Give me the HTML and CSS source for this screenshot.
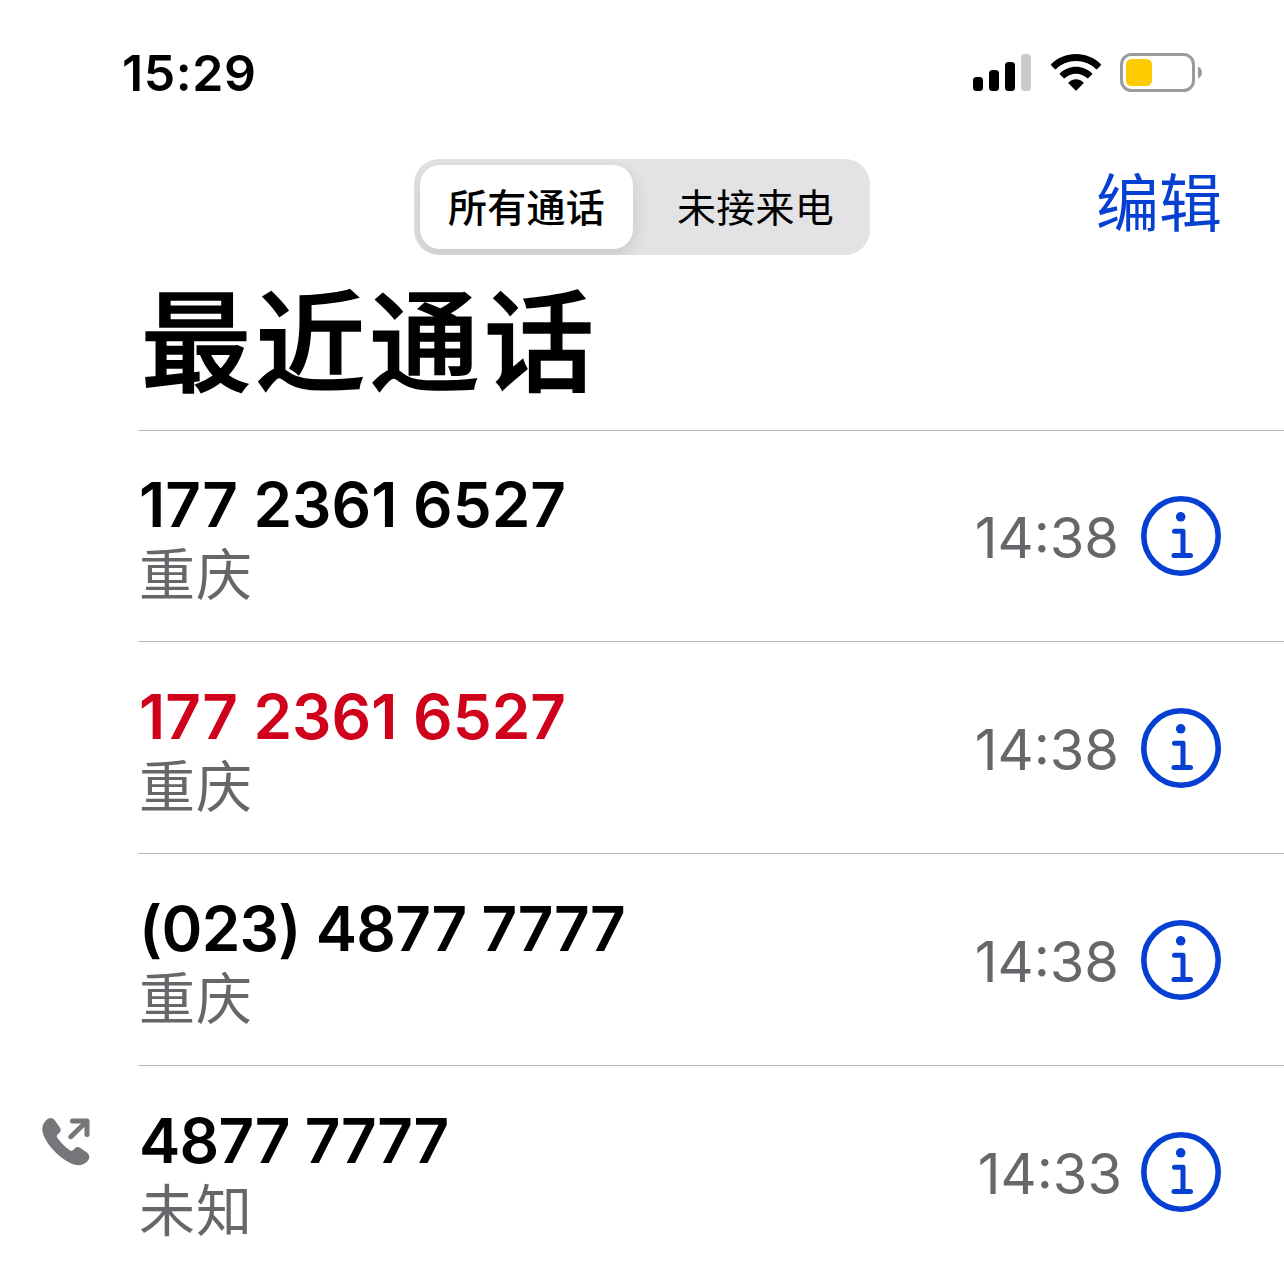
FILE: index.html
```html
<!DOCTYPE html>
<html lang="zh-CN">

<head>
    <meta charset="UTF-8">
    <meta name="viewport" content="width=device-width, initial-scale=1.0">
    <title>最近通话</title>
    <link rel="stylesheet" href="styles.css">
</head>

<body>
    <div class="status-bar">
        <span class="clock">15:29</span>
        <div class="status-icons">
            <svg class="signal" width="58" height="37" viewBox="0 0 58 37">
                <rect x="0" y="23" width="10" height="14" rx="3.5"/>
                <rect x="16" y="16" width="10" height="21" rx="3.5"/>
                <rect x="32" y="8" width="10" height="29" rx="3.5"/>
                <rect x="48" y="0" width="10" height="37" rx="3.5" fill="#cbcbcb"/>
            </svg>
            <svg class="wifi" width="50" height="37" viewBox="0 0 50 37">
                <path d="M25 0C34.500 0 43.500 3.700 49.700 10Q50.300 10.700 49.700 11.400L46.200 14.900Q45.500 15.500 44.800 14.900C39.500 9.800 32.500 7 25 7S10.500 9.800 5.200 14.900Q4.500 15.500 3.800 14.900L.3 11.400Q-.3 10.700 .3 10C6.500 3.700 15.500 0 25 0Z"/>
                <path d="M25 12.700C31.100 12.700 36.800 15.100 41 19.200Q41.700 19.900 41 20.600L37.400 24.100Q36.700 24.700 36 24.100C33 21.300 29.200 19.700 25 19.700S17 21.300 14 24.100Q13.300 24.700 12.600 24.100L9 20.600Q8.300 19.900 9 19.200C13.200 15.100 18.900 12.700 25 12.700Z"/>
                <path d="M25 25.300C27.700 25.300 30.300 26.400 32.300 28.200Q33 28.900 32.300 29.600L25.700 36.200Q25 36.900 24.300 36.200L17.700 29.600Q17 28.900 17.700 28.200C19.700 26.400 22.300 25.300 25 25.300Z"/>
            </svg>
            <svg class="battery" width="82" height="39" viewBox="0 0 82 39">
                <rect x="1.500" y="1.500" width="72" height="36" rx="10" fill="none" stroke="#999b9c" stroke-width="3"/>
                <rect x="6" y="6" width="26" height="27" rx="5.500" fill="#fecb00"/>
                <path d="M78 13.500C83.300 15.800 83.300 23.200 78 25.500Z" fill="#999b9c"/>
            </svg>
        </div>
    </div>

    <div class="nav-bar">
        <div class="segmented">
            <button class="segment active">所有通话</button>
            <button class="segment">未接来电</button>
        </div>
        <a class="edit">编辑</a>
    </div>

    <h1>最近通话</h1>

    <ul class="call-list">
        <li class="call">
            <div class="caller">
                <p class="number">177 2361 6527</p>
                <p class="place">重庆</p>
            </div>
            <span class="time">14:38</span>
            <svg class="info" viewBox="0 0 80 80">
                <use href="#info-icon"/>
            </svg>
        </li>
        <li class="call missed">
            <div class="caller">
                <p class="number">177 2361 6527</p>
                <p class="place">重庆</p>
            </div>
            <span class="time">14:38</span>
            <svg class="info" viewBox="0 0 80 80">
                <use href="#info-icon"/>
            </svg>
        </li>
        <li class="call">
            <div class="caller">
                <p class="number landline">(023) 4877 7777</p>
                <p class="place">重庆</p>
            </div>
            <span class="time">14:38</span>
            <svg class="info" viewBox="0 0 80 80">
                <use href="#info-icon"/>
            </svg>
        </li>
        <li class="call">
            <svg class="outgoing" width="48" height="48" viewBox="0 0 48 48">
                <path d="M3.500 3C6.500-.8 10.500-.9 13.300 3L18 9.800C19.300 11.700 18.900 13.300 17.400 14.800L15.400 16.800C14.600 17.700 14.600 18.500 15.200 19.500C18.200 24.200 23.200 29.400 28.200 32.600C29.300 33.200 30.100 33.200 30.900 32.300L32.800 30.200C34.200 28.800 35.800 28.400 37.700 29.600L44.500 34.200C48.200 36.900 48.200 40.500 44.900 43.700C40.600 47.900 34.700 48.400 27.600 44.700C17.200 39.200 8.300 30.300 3.100 20.400C-.6 13.300-.8 7.800 3.500 3Z" fill="#77777b"/>
                <path d="M30.500 3H45V16.500M44.800 3.200L28.800 18.700" fill="none" stroke="#77777b" stroke-width="5" stroke-linecap="round" stroke-linejoin="round"/>
            </svg>
            <div class="caller">
                <p class="number landline">4877 7777</p>
                <p class="place">未知</p>
            </div>
            <span class="time">14:33</span>
            <svg class="info" viewBox="0 0 80 80">
                <use href="#info-icon"/>
            </svg>
        </li>
    </ul>

    <svg class="defs">
        <symbol id="info-icon" viewBox="0 0 80 80">
            <circle cx="40" cy="40" r="37.200" fill="none" stroke="#0640d2" stroke-width="5.600"/>
            <circle cx="39.700" cy="20.800" r="4.800" fill="#0640d2"/>
            <path d="M33.500 35.300H42V59.500M33 59.500H49.500" fill="none" stroke="#0640d2" stroke-width="5" stroke-linecap="round" stroke-linejoin="round"/>
        </symbol>
    </svg>
</body>

</html>
```
FILE: styles.css
```css
*, *::before, *::after {
    box-sizing: border-box;
}

:root {
    --blue: #0640d2;
    --red: #d0021b;
    --gray: #66666b;
    --line: #b8b8bb;
    --latin: Inter, "Liberation Sans", sans-serif;
    --cjk: "Noto Sans CJK SC", sans-serif;
}

body {
    margin: 0;
    height: 1270px;
    overflow: hidden;
    background: #fff;
    color: #000;
    font-family: var(--cjk);
}

.status-bar {
    display: flex;
    justify-content: space-between;
    align-items: center;
    height: 145px;
    padding: 0 82px 0 122px;
}

.clock {
    font-family: var(--latin);
    font-size: 50px;
    font-weight: 600;
    line-height: 60px;
    letter-spacing: 0.6px;
}

.status-icons {
    display: flex;
    align-items: center;
}

.wifi {
    margin-left: 19.5px;
}

.battery {
    margin-left: 19.5px;
}

.nav-bar {
    display: grid;
    grid-template-columns: 1fr 456px 1fr;
    align-items: start;
    height: 125px;
    padding: 14px 62px 0;
}

.segmented {
    grid-column: 2;
    display: flex;
    height: 96px;
    padding: 6px;
    border-radius: 25px;
    background: #e3e3e5;
    overflow: hidden;
}

.segment {
    width: 213px;
    padding: 0 0 4px;
    border: none;
    border-radius: 20px;
    background: none;
    color: #000;
    font-family: var(--cjk);
    font-size: 39px;
    line-height: 80px;
    letter-spacing: 0.3px;
}

.segment.active {
    margin-right: 16px;
    background: #fff;
    font-weight: 500;
    box-shadow: 0 6px 18px rgba(0, 0, 0, 0.13);
}

.edit {
    justify-self: end;
    color: var(--blue);
    font-size: 63px;
    line-height: 80px;
}

h1 {
    margin: 0 0 0 138px;
    padding-left: 3px;
    height: 161px;
    border-bottom: 1px solid var(--line);
    font-size: 110px;
    font-weight: 500;
    line-height: 130px;
    letter-spacing: 4.3px;
    -webkit-text-stroke: 1.5px #000;
}

.call-list {
    margin: 0;
    padding: 0;
    list-style: none;
}

.call {
    display: flex;
    position: relative;
    height: 212px;
    margin-left: 138px;
    padding: 36px 63px 0 1px;
    border-bottom: 1px solid var(--line);
}

.call:first-child {
    height: 211px;
    padding-top: 35px;
}

.caller {
    flex: 1;
}

.caller p {
    margin: 0;
}

.caller .number {
    font-family: var(--latin);
    font-size: 62px;
    font-weight: 600;
    line-height: 78px;
}

.caller .landline {
    font-feature-settings: "calt" 0;
    letter-spacing: -0.7px;
}

.missed .number {
    color: var(--red);
}

.caller .place {
    color: var(--gray);
    font-size: 56px;
    line-height: 54px;
    letter-spacing: 1px;
}

.time {
    margin-top: 38px;
    color: var(--gray);
    font-family: var(--latin);
    font-size: 56px;
    line-height: 68px;
}

.info {
    width: 80px;
    height: 80px;
    margin: 30px 0 0 22px;
}

.call:last-child .info {
    margin-left: 19px;
}

/* sits in the gutter left of the separators */
.outgoing {
    position: absolute;
    left: -96px;
    top: 52px;
}

.defs {
    display: none;
}
```
